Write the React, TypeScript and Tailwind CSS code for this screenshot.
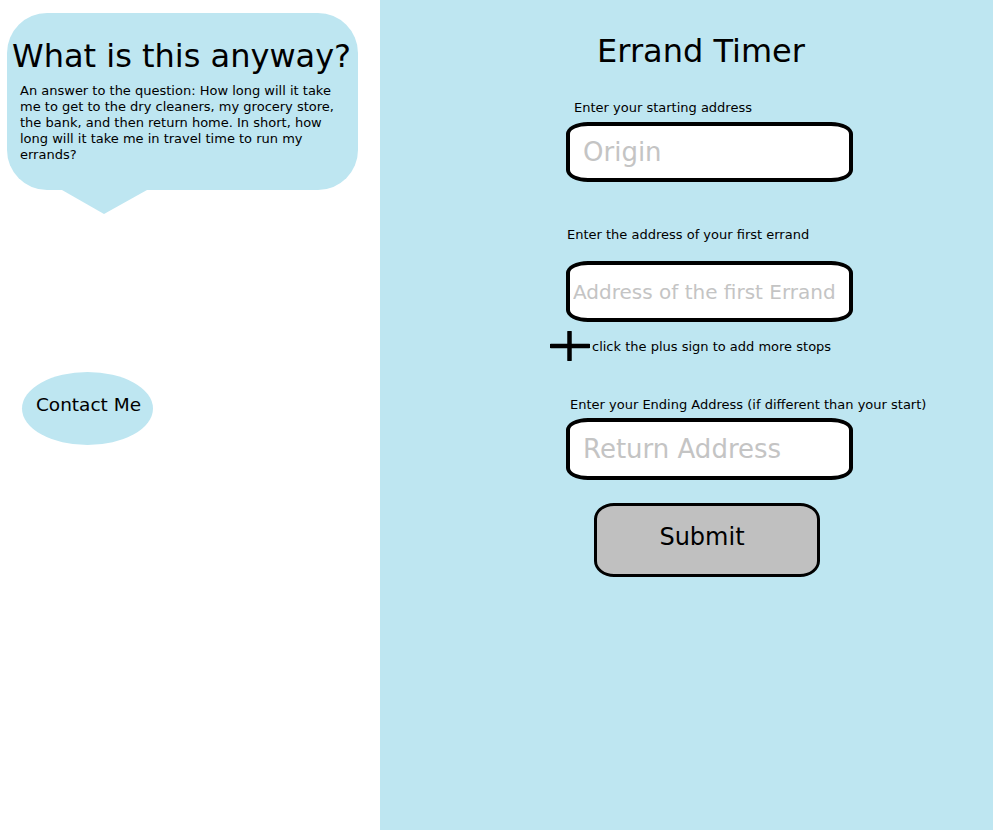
import React from "react";

const font = { fontFamily: '"DejaVu Sans", Verdana, sans-serif' };

function PlusIcon() {
  return (
    <svg width="40" height="30" viewBox="0 0 40 30" className="shrink-0">
      <path d="M1 15 H39" stroke="black" strokeWidth="4.5" strokeLinecap="round" />
      <path d="M19.5 1 V29" stroke="black" strokeWidth="4.5" strokeLinecap="round" />
    </svg>
  );
}

function AddressInput({ placeholder, size, height }: { placeholder: string; size: "lg" | "md"; height: string }) {
  return (
    <input
      type="text"
      placeholder={placeholder}
      className={
        height +
        (size === "lg"
          ? " block w-[287px] bg-white border-4 border-black rounded-[22px_/_12px] px-[13px] text-[26px] text-black outline-none placeholder:text-[#c4c4c4]"
          : " block w-[287px] bg-white border-4 border-black rounded-[22px_/_12px] px-[3px] text-[20px] text-black outline-none placeholder:text-[#c4c4c4]")
      }
      style={font}
    />
  );
}

export default function App() {
  return (
    <div className="flex min-h-screen w-full bg-white text-black" style={font}>
      <div className="w-[380px] shrink-0 flex flex-col pt-[13px]">
        <div className="ml-[7px] w-[351px] h-[177px] bg-[#bee6f1] rounded-[40px] pt-[25px]">
          <h2 className="text-[32px] leading-[37px] ml-[5px] whitespace-nowrap">What is this anyway?</h2>
          <p className="mt-[8px] ml-[13px] w-[328px] text-[13px] leading-[16px]">
            An answer to the question: How long will it take me to get to the dry cleaners, my grocery store, the bank, and then return home. In short, how long will it take me in travel time to run my errands?
          </p>
        </div>
        <div className="ml-[62px] w-0 h-0 border-l-[42px] border-r-[43px] border-t-[24px] border-l-transparent border-r-transparent border-t-[#bee6f1]" />
        <button className="mt-[158px] ml-[22px] w-[131px] h-[73px] rounded-[50%] bg-[#bee6f1] text-[18.5px] pb-[8px] pl-[2px]">
          Contact Me
        </button>
      </div>

      <div className="flex-1 bg-[#bee6f1] flex flex-col pt-[33px]">
        <h1 className="text-[32px] leading-[37px] text-center pl-[29px]">Errand Timer</h1>

        <label className="mt-[30px] ml-[194px] text-[13px] leading-[15px]">Enter your starting address</label>
        <div className="mt-[7px] ml-[186px]">
          <AddressInput placeholder="Origin" size="lg" height="h-[60px]" />
        </div>

        <label className="mt-[45px] ml-[187px] text-[13px] leading-[15px]">Enter the address of your first errand</label>
        <div className="mt-[19px] ml-[186px]">
          <AddressInput placeholder="Address of the first Errand" size="md" height="h-[61px]" />
        </div>

        <div className="mt-[9px] ml-[170px] flex items-center gap-[2px]">
          <PlusIcon />
          <span className="text-[13px] leading-[15px]">click the plus sign to add more stops</span>
        </div>

        <label className="mt-[36px] ml-[190px] text-[13px] leading-[15px]">Enter your Ending Address (if different than your start)</label>
        <div className="mt-[6px] ml-[186px]">
          <AddressInput placeholder="Return Address" size="lg" height="h-[62px]" />
        </div>

        <button className="mt-[23px] ml-[214px] w-[226px] h-[74px] bg-[#c0c0c0] border-[3px] border-black rounded-[20px_/_16px] text-[24px] pr-[10px] pb-[6px]">
          Submit
        </button>
      </div>
    </div>
  );
}
